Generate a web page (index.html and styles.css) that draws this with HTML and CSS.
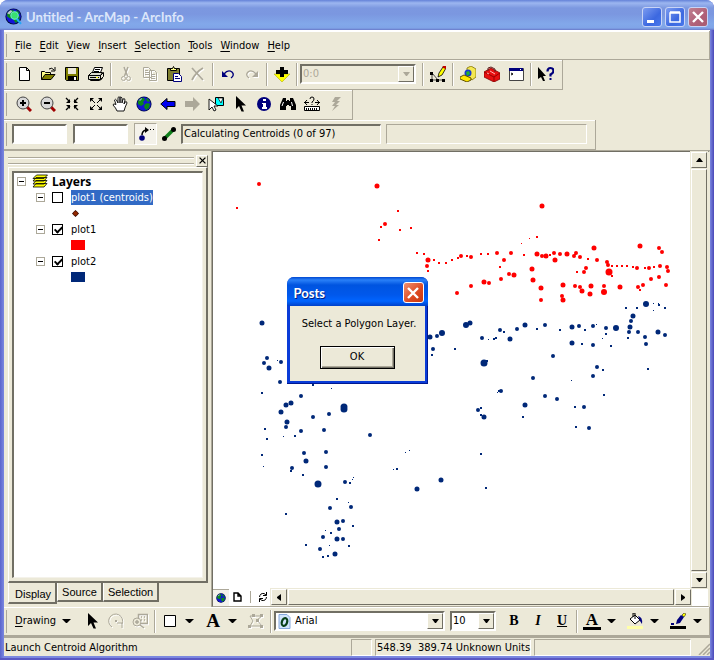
FILE: index.html
```html
<!DOCTYPE html>
<html lang="en">
<head>
<meta charset="utf-8">
<title>Untitled - ArcMap - ArcInfo</title>
<link rel="stylesheet" href="styles.css">
</head>
<body>
<svg class="defs" aria-hidden="true">
  <symbol id="globe" viewBox="0 0 16 16"><circle cx="8" cy="8" r="7.6" fill="#001040"/><circle cx="8" cy="8" r="6.8" fill="#1414d8"/><path d="M2 5 5 2h3l1 2-2 2 1 2-3 2-3-2zM9 8l3-1 2 1-1 4-3 2-2-3zM11 2l3 3-2 1-2-2z" fill="#0a8a1c"/><path d="M3 4 6 2v1L4 5z" fill="#9ab4c8"/></symbol>
  <symbol id="caret" viewBox="0 0 9 5"><path d="M0 0h9L5 4H4z"/></symbol>
  <symbol id="left" viewBox="0 0 4 7"><path d="M4 0v7L0 4V3z"/></symbol>
  <symbol id="right" viewBox="0 0 4 7"><path d="M0 0v7l4-3V3z"/></symbol>
  <symbol id="up" viewBox="0 0 7 4"><path d="M0 4h7L4 0H3z"/></symbol>
  <symbol id="down" viewBox="0 0 7 4"><path d="M0 0h7L4 4H3z"/></symbol>
  <symbol id="pointer" viewBox="0 0 16 16"><path d="M4 0v13l3-3 2.500 5.500h2.500L9.500 9.500H14z"/></symbol>
  <symbol id="cross" viewBox="0 0 12 12"><path d="M1 1 11 11M11 1 1 11" fill="none" stroke="currentColor" stroke-width="2.200"/></symbol>
</svg>

<div class="window">
  <header class="titlebar">
    <svg class="app-icon" viewBox="0 0 16 16"><use href="#globe"/><path d="M2 5 5 2l2 1-3 3z" fill="#b8c4cc"/><circle cx="9" cy="7" r="3.500" fill="#38e070" stroke="#70e8d0"/><path d="M11 10l4 5" stroke="#20a8f8" stroke-width="2"/></svg>
    <h1>Untitled - ArcMap - ArcInfo</h1>
    <button class="caption" aria-label="Minimize"><svg viewBox="0 0 18 18"><path d="M4 12h7v3H4z" fill="#fff"/></svg></button>
    <button class="caption" aria-label="Maximize"><svg viewBox="0 0 18 18"><path d="M4 5h10v9H4zM4 4h10" fill="none" stroke="#fff" stroke-width="1.500"/></svg></button>
    <button class="caption close" aria-label="Close"><svg viewBox="0 0 18 18"><path d="M4 4 14 14M14 4 4 14" stroke="#fff" stroke-width="2.400"/></svg></button>
  </header>

  <div class="client">
    <nav class="bar menubar">
      <button><u>F</u>ile</button><button><u>E</u>dit</button><button><u>V</u>iew</button><button><u>I</u>nsert</button><button><u>S</u>election</button><button><u>T</u>ools</button><button><u>W</u>indow</button><button><u>H</u>elp</button>
    </nav>

    <div class="bar fit">
      <button class="tool" aria-label="New"><svg viewBox="0 0 16 16"><path d="M3.500 1.500h7l3 3v10h-10zM10.500 1.500v3h3" fill="#fff" stroke="#000"/></svg></button>
      <button class="tool" aria-label="Open"><svg viewBox="0 0 16 16"><path d="M1.500 13.500v-8h3l1 1h5v2" fill="#ff8" stroke="#000"/><path d="M1.500 13.500 5 8.500h10l-4 5z" fill="#808000" stroke="#000"/><path d="M9 3q3-2 5 1M15 1v4h-4" fill="none" stroke="#000"/></svg></button>
      <button class="tool" aria-label="Save"><svg viewBox="0 0 16 16"><path d="M1.500 1.500h13v13h-12l-1-1z" fill="#808000" stroke="#000"/><path d="M4 2h8v6H4z" fill="#ece9d8"/><path d="M4 10h9v4H4z"/><path d="M10 11h2v3h-2z" fill="#fff"/></svg></button>
      <button class="tool" aria-label="Print"><svg viewBox="0 0 16 16"><path d="M4.500 6.500 6.500 1.500h8l-2 5z" fill="#fff" stroke="#000"/><path d="M7 3.500h5M6 5.500h5"  stroke="#000"/><path d="M.5 9.500l3-3h11l-2 3zM.5 9.500h12v4H.5z" fill="#dcdcd0" stroke="#000"/><path d="M12.500 9.500l3-3v4l-3 3M2.500 13.500v1h9l3-2" fill="none" stroke="#000"/><path d="M2 11.500h9" stroke="#000"/><path d="M8 11h2v1H8z" fill="#ff0"/></svg></button>
      <i class="sep"></i>
      <button class="tool off" aria-label="Cut"><svg viewBox="0 0 16 16"><path d="M6 1l3.500 9M10 1 6.500 10" fill="none" stroke="currentColor" stroke-width="1.500"/><circle cx="5.500" cy="12.500" r="2" fill="none" stroke="currentColor"/><circle cx="10.500" cy="12.500" r="2" fill="none" stroke="currentColor"/></svg></button>
      <button class="tool off" aria-label="Copy"><svg viewBox="0 0 16 16"><path d="M1.500 1.500h5l3 3v7h-8zM7.500 4.500h5l2 2v8h-7zM3 4.500h3M3 6.500h4M3 8.500h4M9 8.500h4M9 10.500h4M9 12.500h4" fill="none" stroke="currentColor"/></svg></button>
      <button class="tool" aria-label="Paste"><svg viewBox="0 0 16 16"><path d="M1.500 2.500h12v12h-12z" fill="#808030" stroke="#000"/><path d="M4.500 4.500v-2h2l1-2 1 2h2v2z" fill="#ff8" stroke="#000"/><path d="M7.500 7.500h5l3 3v5h-8z" fill="#fff" stroke="#00007c"/><path d="M9 10.500h3M9 12.500h5" stroke="#00007c"/></svg></button>
      <button class="tool off" aria-label="Delete"><svg viewBox="0 0 16 16"><path d="M2 2l11 12M13 2Q6 6 2 14" fill="none" stroke="currentColor" stroke-width="1.800"/></svg></button>
      <i class="sep"></i>
      <button class="tool" aria-label="Undo"><svg viewBox="0 0 16 16"><path d="M4 8q4-5 8-2 3 3-1 6" fill="none" stroke="#00007c" stroke-width="1.400"/><path d="M2 5v6h6z" fill="#00007c"/></svg></button>
      <button class="tool off" aria-label="Redo"><svg viewBox="0 0 16 16"><path d="M12 8Q8 3 4 6q-3 3 1 6" fill="none" stroke="currentColor" stroke-width="1.300"/><path d="M14 5v6H8z" fill="currentColor"/></svg></button>
      <i class="sep"></i>
      <button class="tool" aria-label="Add data"><svg viewBox="0 0 16 16"><path d="M0 8h16l-8 8z" fill="#ff0" stroke="#a0a000" stroke-width=".5"/><path d="M6 1h4v3h4v4h-4v3H6V8H2V4h4z"/></svg></button>
      <i class="sep"></i>
      <span class="combo scale"><select aria-label="Scale" disabled><option>0:0</option></select><b><svg class="down"><use href="#down"/></svg></b></span>
      <i class="sep"></i>
      <button class="tool" aria-label="Editor"><svg viewBox="0 0 16 16"><path d="M2 7v7h12M2 7l6 7" fill="none" stroke="#000" stroke-width=".7"/><path d="M0 6h3v3H0zM0 13h3v3H0zM6 13h3v3H6zM12 13h3v3h-3z"/><path d="M8 11l1-4 4-6 3 1-4 7z" fill="#ff0" stroke="#000" stroke-width=".8"/><path d="M12.500 0h3.500v3l-3-1z" fill="#c00000"/></svg></button>
      <i class="sep"></i>
      <button class="tool" aria-label="Catalog"><svg viewBox="0 0 16 16"><path d="M7 2l4-2 5 3v8l-4 3-5-4z" fill="#f4e850" stroke="#807000" stroke-width=".8"/><circle cx="8" cy="7" r="3.500" fill="#1838d0"/><path d="M6 6l3-1 1 3-3 2z" fill="#20b030"/><path d="M0 11l4-2 7 3v2l-4 2-7-3z" fill="#ffe800" stroke="#605000"/></svg></button>
      <button class="tool" aria-label="Toolbox"><svg viewBox="0 0 16 16"><path d="M0 6l7-4 9 5v6l-6 3L0 11z" fill="#e81010" stroke="#800000" stroke-width=".8"/><path d="M0 6l10 5 6-4M10 11v5" fill="none" stroke="#900"/><path d="M4 5V2l3-1 4 2v3" fill="none" stroke="#602020"/><path d="M3 7l2 1M6 5l5 3" stroke="#ffb0b0"/></svg></button>
      <button class="tool" aria-label="Command window"><svg viewBox="0 0 16 16"><path d="M1.500 2.500h14v12h-14z" fill="#fff" stroke="#444"/><path d="M1 2h14v3H1z" fill="#00007c"/><path d="M3 7l2 1-2 1" fill="none" stroke="#000"/><path d="M12 3h1v1h-1z" fill="#fff"/></svg></button>
      <i class="sep"></i>
      <button class="tool" aria-label="What's this?"><svg viewBox="0 0 16 16"><path d="M0 1v12l3-2 2 4h2L5 10h3z"/><path d="M9.500 5.500q0-3.500 3-3.500t3 3q0 2-3 3.500v2" fill="none" stroke="#00007c" stroke-width="2.200"/><path d="M11.500 12h2v2h-2z" fill="#00007c"/></svg></button>
    </div>

    <div class="bar fit">
      <button class="tool" aria-label="Zoom in"><svg viewBox="0 0 16 16"><path d="M11 11l4 4" stroke="#a00000" stroke-width="3"/><circle cx="7" cy="7" r="6" fill="#d8d8d8" stroke="#444"/><path d="M4 7h6M7 4v6" stroke="#000" stroke-width="2"/></svg></button>
      <button class="tool" aria-label="Zoom out"><svg viewBox="0 0 16 16"><path d="M11 11l4 4" stroke="#a00000" stroke-width="3"/><circle cx="7" cy="7" r="6" fill="#d8d8d8" stroke="#444"/><path d="M4 7h6" stroke="#000" stroke-width="2"/></svg></button>
      <button class="tool" aria-label="Fixed zoom in"><svg viewBox="0 0 16 16"><path d="M2 2l4 4M14 2l-4 4M2 14l4-4M14 14l-4-4" stroke="#000" stroke-width="1.300"/><path d="M6 3v4H2zM10 3v4h4zM6 13V9H2zM10 13V9h4z"/></svg></button>
      <button class="tool" aria-label="Fixed zoom out"><svg viewBox="0 0 16 16"><path d="M3 3l4 4M13 3 9 7M3 13l4-4M13 13 9 9" stroke="#000"/><path d="M2 2h4L2 6zM14 2h-4l4 4zM2 14h4l-4-4zM14 14h-4l4-4z"/></svg></button>
      <button class="tool" aria-label="Pan"><svg viewBox="0 0 16 16"><path d="M5 15q-1-3-4-6 0-2 3-.5L2.500 4q1-1.500 2 0L6 7V1.500q1-1.500 2 0V7V1.500Q9 0 10 2v5l1-4q2-1 2 1l-1 4 1-2q2-1 2 1-2 4-3 8z" fill="#fff" stroke="#000" stroke-width=".9"/></svg></button>
      <button class="tool" aria-label="Full extent"><svg><use href="#globe"/></svg></button>
      <button class="tool" aria-label="Previous extent"><svg viewBox="0 0 16 16"><path d="M.8 8 7 2.500v3h8v5H7v3z" fill="#0000f0" stroke="#000"/></svg></button>
      <button class="tool" aria-label="Next extent"><svg viewBox="0 0 16 16"><path d="M16 8 9 1v4H1v6h8v4z" fill="#aca899"/></svg></button>
      <button class="tool" aria-label="Select features"><svg viewBox="0 0 16 16"><path d="M7.500 1.500h8v8h-8z" fill="#0ff" stroke="#000"/><path d="M10 2l3 5 2-5z" fill="#fff" stroke="#000" stroke-width=".7"/><path d="M1 3v11l3-3 2 4 2-1-2-4h4z" fill="#fff" stroke="#000" stroke-width=".9"/></svg></button>
      <button class="tool" aria-label="Select elements"><svg><use href="#pointer"/></svg></button>
      <button class="tool" aria-label="Identify"><svg viewBox="0 0 16 16"><circle cx="8" cy="8" r="7" fill="#00007c"/><path d="M7 3h3v2H7zM6 7h4v4h1v2H6v-2h1V8H6z" fill="#fff"/></svg></button>
      <button class="tool" aria-label="Find"><svg viewBox="0 0 16 16"><path d="M3 2h3v3h1V4h2v1h1V2h3l3 7v5h-5v-4H9v-1H7v1H6v4H0V9z"/><path d="M3.500 6 2 10M11.500 6l1 4" stroke="#fff"/></svg></button>
      <button class="tool" aria-label="Measure"><svg viewBox="0 0 16 16"><path d="M0 6.500h5M11 6.500h5M3 4 .7 6.500 3 9M13 4l2.300 2.500L13 9M6 3q0-2 2-2t2 2-2 3v1M8 8v1" fill="none" stroke="#000"/><path d="M.5 10.500h15v4H.5z" fill="#fff" stroke="#000"/><path d="M2.500 12v2M4.500 12v2M6.500 12v2M8.500 12v2M10.500 12v2M12.500 12v2" stroke="#000"/></svg></button>
      <button class="tool" aria-label="Hyperlink"><svg viewBox="0 0 16 16"><path d="M7 1h6L9 5h3l-4 4h3l-7 6 3-5H4l3-4H4z" fill="#aca899"/></svg></button>
    </div>

    <div class="bar fit entry">
      <input aria-label="X"><input aria-label="Y">
      <button class="tool pressed" aria-label="Sketch"><svg viewBox="0 0 16 16"><circle cx="4" cy="12" r="2.800" fill="#00007c"/><path d="M4 9q0-4 4-5" fill="none" stroke="#000" stroke-width="1.500"/><path d="M7 1l4 3-4 3zM12 3h1v1h-1zM15 3h1v1h-1z"/></svg></button>
      <button class="tool" aria-label="Line"><svg viewBox="0 0 16 16"><path d="M3 13 13 3" stroke="#10801c" stroke-width="3.500"/><circle cx="3.500" cy="12.500" r="2.500"/><circle cx="12.500" cy="3.500" r="2.500"/></svg></button>
      <output class="cell message">Calculating Centroids (0 of 97)</output>
      <span class="cell blank"></span>
    </div>

    <main>
      <aside>
        <div class="grab"><i></i><button aria-label="Close table of contents"><svg viewBox="0 0 12 12"><use href="#cross"/></svg></button></div>
        <div class="frame">
          <ul class="tree">
            <li class="root"><i class="minus"></i><svg class="stack" viewBox="0 0 16 14"><path d="M4 9.500h11l-3 3.500H1z M4 6.500h11l-3 3.500H1z M4 3.500h11l-3 3.500H1zM4.500 1h11l-3.500 3.500H1z" fill="#ff0" stroke="#000" stroke-width=".8"/></svg><strong>Layers</strong></li>
            <li><i class="minus"></i><input type="checkbox" id="l0"><label class="chosen" for="l0">plot1 (centroids)</label></li>
            <li class="symbol"><svg viewBox="0 0 7 7"><path d="M3.500 0 7 3.500 3.500 7 0 3.500z" fill="#200"/><circle cx="3.500" cy="3.500" r="2.300" fill="#902800"/></svg></li>
            <li><i class="minus"></i><input type="checkbox" id="l1" checked><label for="l1">plot1</label></li>
            <li class="symbol"><b class="swatch red"></b></li>
            <li><i class="minus"></i><input type="checkbox" id="l2" checked><label for="l2">plot2</label></li>
            <li class="symbol"><b class="swatch navy"></b></li>
          </ul>
        </div>
        <div class="tabs"><button class="current">Display</button><button>Source</button><button>Selection</button></div>
      </aside>

      <section class="view">
        <svg class="map" role="img" aria-label="Map of plot1 and plot2">
          <g transform="translate(-213 -152)">
            <g class="plot1">
              <path class="s1" d="M529 238h0M521 243h0"/>
              <path class="s2" d="M237 208h0M398 211h0M381 227h0M400 230h0M411 228h0M379 240h0M537 237h0M417 253h0M424 254h0M428 271h0M434 260h0M439 263h0M446 263h0M452 260h0M458 258h0M467 256h0M481 254h0M488 254h0M500 267h0M524 255h0M550 255h0M588 259h0M612 266h0M617 266h0M622 266h0M627 266h0M633 267h0M645 268h0M654 267h0M640 290h0M612 276h0M577 272h0"/>
              <path class="s3" d="M259 184h0M385 224h0M427 266h0M461 256h0M471 257h0M497 253h0M511 253h0M504 260h0M542 256h0M554 253h0M560 254h0M574 256h0M576 253h0M580 257h0M597 260h0M607 262h0M608 265h0M637 268h0M649 268h0M660 266h0M667 267h0M668 271h0M659 248h0M662 252h0M659 277h0M651 279h0M643 285h0M638 287h0M666 285h0M586 268h0M584 272h0M541 300h0M575 286h0M580 287h0M604 286h0M562 296h0M509 274h0M501 279h0M489 283h0M471 286h0M457 293h0"/>
              <path class="s4" d="M377 186h0M542 206h0M428 260h0M537 254h0M546 256h0M555 260h0M567 254h0M594 248h0M640 246h0M532 269h0M533 280h0M541 288h0M563 285h0M582 291h0M591 286h0M590 294h0M620 287h0M563 300h0M514 275h0M484 282h0"/>
              <path class="s5" d="M604 292h0"/>
              <path class="s6" d="M609 272h0"/>
            </g>
            <g class="plot2">
              <path class="s1" d="M653 303h0M658 303h0M653 310h0M602 338h0M596 324h0M488 339h0M571 380h0M497 392h0M277 360h0M331 388h0M283 436h0M263 466h0M353 477h0M352 479h0M348 502h0M325 530h0M329 545h0M405 452h0M409 450h0M393 469h0"/>
              <path class="s2" d="M659 305h0M665 308h0M637 308h0M626 308h0M628 338h0M648 369h0M606 334h0M611 346h0M585 330h0M582 344h0M560 330h0M537 329h0M504 332h0M496 338h0M494 339h0M432 355h0M455 349h0M487 361h0M603 370h0M499 391h0M604 395h0M523 417h0M575 407h0M576 427h0M481 408h0M481 415h0M481 454h0M486 488h0M262 393h0M313 385h0M265 429h0M267 439h0M295 436h0M262 455h0M291 471h0M303 475h0M350 483h0M337 499h0M286 514h0M331 533h0M353 526h0M349 546h0M306 545h0M323 557h0M328 556h0M397 469h0"/>
              <path class="s3" d="M631 321h0M629 332h0M638 332h0M645 337h0M646 344h0M665 335h0M606 328h0M593 326h0M579 326h0M593 345h0M545 325h0M517 329h0M500 330h0M482 338h0M437 336h0M433 349h0M553 356h0M597 367h0M593 376h0M533 378h0M501 391h0M545 396h0M557 399h0M584 407h0M589 428h0M478 410h0M267 358h0M264 363h0M281 362h0M280 382h0M301 396h0M329 414h0M313 417h0M286 427h0M301 431h0M324 430h0M370 435h0M304 453h0M326 452h0M326 467h0M292 468h0M345 482h0M351 507h0M330 508h0M343 521h0M339 529h0M323 537h0M343 539h0M320 549h0"/>
              <path class="s4" d="M633 316h0M630 327h0M658 332h0M572 327h0M572 343h0M525 325h0M510 339h0M470 323h0M430 337h0M525 405h0M484 417h0M441 480h0M417 489h0M262 323h0M269 368h0M291 403h0M286 405h0M281 412h0M287 422h0M306 461h0M337 522h0M337 539h0M335 554h0"/>
              <path class="s5" d="M646 304h0M616 328h0M466 325h0M442 333h0"/>
              <path class="s6" d="M484 363h0M318 484h0M344 407h0M344 409h0"/>
            </g>
          </g>
        </svg>
        <div class="vscroll"><button class="face" aria-label="Scroll up"><svg class="down"><use href="#up"/></svg></button><i class="face thumb"></i><button class="face" aria-label="Scroll down"><svg class="down"><use href="#down"/></svg></button></div>
        <div class="hscroll">
          <button class="mode on" aria-label="Data view"><svg><use href="#globe"/></svg></button>
          <button class="mode" aria-label="Layout view"><svg viewBox="0 0 10 10"><path d="M2 1h4l3 3v5H2zM6 1v3h3" fill="none" stroke="#000" stroke-width="1.400"/></svg></button>
          <i class="rule"></i>
          <button class="mode" aria-label="Refresh"><svg viewBox="0 0 10 10"><path d="M1.500 5Q2 1 6 1.500L8 3M8.500 5Q8 9 4 8.500L2 7M8.500 0v3.500H5M1.500 10V6.500H5" fill="none" stroke="#000"/></svg></button>
          <button class="face" aria-label="Scroll left"><svg class="side"><use href="#left"/></svg></button><i class="face thumb"></i><button class="face" aria-label="Scroll right"><svg class="side"><use href="#right"/></svg></button><i class="corner"></i>
        </div>
      </section>
    </main>

    <div class="bar drawing">
      <button class="menu"><span><u>D</u>rawing</span><svg class="caret"><use href="#caret"/></svg></button>
      <button class="tool" aria-label="Pointer"><svg><use href="#pointer"/></svg></button>
      <button class="tool off" aria-label="Rotate"><svg viewBox="0 0 16 16"><path d="M4 14A7 7 0 1 1 14 11M14 15v-5H9" fill="none" stroke="currentColor"/><path d="M7 7h2v2H7z" fill="currentColor"/></svg></button>
      <button class="tool off" aria-label="Zoom to selected"><svg viewBox="0 0 16 16"><path d="M6.500 1.500h9v9h-9zM9 4h1M12 4h1M9 7h1M12 7h1" fill="none" stroke="currentColor" stroke-width="1.500"/><circle cx="5" cy="9" r="4" fill="#ece9d8" stroke="currentColor"/><path d="M3 9h4M5 7v4M8 12l4 3" stroke="currentColor" stroke-width="1.500"/></svg></button>
      <i class="sep"></i>
      <button class="tool" aria-label="Rectangle"><svg viewBox="0 0 16 16"><path d="M2.500 2.500h11v11h-11z" fill="#fff" stroke="#000"/></svg></button><button class="drop" aria-label="Shapes"><svg class="caret"><use href="#caret"/></svg></button>
      <button class="tool letter" aria-label="Text">A</button><button class="drop" aria-label="Text tools"><svg class="caret"><use href="#caret"/></svg></button>
      <button class="tool off" aria-label="Edit vertices"><svg viewBox="0 0 16 16"><path d="M2 3h12L9 7l5 6H2l3-5z" fill="none" stroke="currentColor"/><path d="M4 1h3v3H4zM12 1h3v3h-3zM0 12h3v3H0zM12 12h3v3h-3zM8 6h3v3H8z" fill="currentColor"/></svg></button>
      <i class="sep"></i>
      <span class="combo font"><svg class="face-icon" viewBox="0 0 13 15"><path d="M1 .5h8l3 3v11H1z" fill="#d0e4fc" stroke="#86a8dc"/><ellipse cx="6.500" cy="8" rx="2.600" ry="4" fill="none" stroke="#084018" stroke-width="2.200" transform="rotate(20 6.500 8)"/></svg><select aria-label="Font"><option>Arial</option></select><b><svg class="down"><use href="#down"/></svg></b></span>
      <span class="combo size"><select aria-label="Font size"><option>10</option></select><b><svg class="down"><use href="#down"/></svg></b></span>
      <button class="tool style bold">B</button><button class="tool style italic">I</button><button class="tool style under">U</button>
      <i class="sep"></i>
      <button class="tool letter ink" aria-label="Text color">A</button><button class="drop" aria-label="Text colors"><svg class="caret"><use href="#caret"/></svg></button>
      <button class="tool" aria-label="Fill color"><svg viewBox="0 0 16 16"><path d="M0 13h16v3H0z" fill="#ffffa8"/><path d="M3 6l5-4 5 5-5 4z" fill="#fff" stroke="#000"/><path d="M8 6V0H6v4" fill="none" stroke="#000"/><path d="M11 3q5 1 4 8l-2-3z" fill="#00007c"/></svg></button><button class="drop" aria-label="Fill colors"><svg class="caret"><use href="#caret"/></svg></button>
      <button class="tool" aria-label="Line color"><svg viewBox="0 0 16 16"><path d="M0 13h16v3H0z"/><path d="M6 11l1-4 4-5 3 2-4 6z" fill="#00007c"/><path d="M12 2l2-2 2 1-2 3z" fill="#ff0" stroke="#000" stroke-width=".5"/><path d="M1 10h3v2H1z" fill="#00007c"/></svg></button><button class="drop" aria-label="Line colors"><svg class="caret"><use href="#caret"/></svg></button>
    </div>

    <footer>
      <span class="hint">Launch Centroid Algorithm</span>
      <span class="cell tiny"></span><span class="cell coords">548.39&nbsp; 389.74 Unknown Units</span><span class="cell last"></span>
      <svg class="grip" viewBox="0 0 12 12"><path d="M1 12 12 1M5 12l7-7M9 12l3-3" stroke="#aca899" stroke-width="1.500"/></svg>
    </footer>
  </div>

  <div class="dialog" role="dialog" aria-labelledby="dlg">
    <header><h2 id="dlg">Posts</h2><button class="caption close" aria-label="Close message"><svg viewBox="0 0 18 18"><path d="M4 4 14 14M14 4 4 14" stroke="#fff" stroke-width="2.400"/></svg></button></header>
    <div class="body"><p>Select a Polygon Layer.</p><button class="ok">OK</button></div>
  </div>
</div>
</body>
</html>
```
FILE: styles.css
```css
* { box-sizing: border-box; }
:root {
  --face: #ece9d8;
  --shade: #aca899;
  --dark: #716f64;
  --navy: #002878;
}
body {
  margin: 0;
  background: #fff;
  color: #000;
  font: 11px/16px "DejaVu Sans Condensed", "Liberation Sans", sans-serif;
}
button, input, select {
  font: inherit;
  color: inherit;
  margin: 0;
  padding: 0;
  border: 0;
  border-radius: 0;
  background: none;
}
svg { display: block; }
.defs { position: absolute; width: 0; height: 0; }

.window {
  position: relative;
  display: flex;
  flex-direction: column;
  height: 100vh;
  min-height: 480px;
  padding: 0 4px 4px;
  border-radius: 8px 8px 0 0;
  background: linear-gradient(90deg, #5a64cc, #7b88e0 4px, #7b88e0 calc(100% - 4px), #4a48b8);
  box-shadow: inset 0 -2px #5a58c4;
}
.titlebar {
  display: flex;
  align-items: center;
  gap: 3px;
  flex: none;
  height: 30px;
  margin: 0 -4px;
  padding: 3px 6px 0 5px;
  border-radius: 8px 8px 0 0;
  background: linear-gradient(#6482d8, #9cb6f0 3px, #7c98e0 8px, #7b97e0 14px, #82a8ea 24px, #80a4e8 28px, #6878c8);
}
.titlebar h1 {
  flex: 1;
  margin: 0;
  padding-left: 1px;
  color: #dce6fa;
  font: bold 13px/20px Lato, "Open Sans", sans-serif;
}
.app-icon { width: 17px; height: 17px; }
.caption {
  width: 20px;
  height: 20px;
  border: 1px solid #c8d4f6;
  border-radius: 3px;
  background: linear-gradient(135deg, #7c9cf0, #3c68e0 60%, #4878ec);
}
.caption.close { background: linear-gradient(135deg, #c08090, #b06078 60%, #a85c70); }
.caption svg { width: 18px; height: 18px; }

.client {
  display: flex;
  flex: 1;
  flex-direction: column;
  min-height: 0;
  border-top: 1px solid #fff;
  background: var(--face);
}
.bar {
  display: flex;
  align-items: center;
  flex: none;
  height: 30px;
  padding: 0 4px 1px 8px;
  border: solid var(--shade);
  border-width: 0 1px 1px 0;
  box-shadow: inset 0 1px #fff;
  background: linear-gradient(var(--shade), var(--shade)) 2px 3px / 1px 23px no-repeat;
}
.fit { align-self: flex-start; }
.menubar { gap: 8px; height: 29px; padding: 1px 4px 0 11px; }
u { text-underline-offset: 2px; }
.tool {
  display: grid;
  place-items: center;
  flex: none;
  width: 24px;
  height: 22px;
}
.tool svg { width: 16px; height: 16px; }
.off { color: var(--shade); }
.off svg { filter: drop-shadow(1px 1px #fff); }
.sep {
  flex: none;
  width: 2px;
  height: 23px;
  margin: 0 2px;
  border-left: 1px solid var(--shade);
  border-right: 1px solid #fff;
}
.combo {
  position: relative;
  display: flex;
  flex: none;
  height: 20px;
  border: 2px solid;
  border-color: var(--dark) #fff #fff var(--dark);
  background: #fff;
}
.combo select {
  flex: 1;
  min-width: 0;
  padding: 0 18px 0 1px;
  appearance: none;
  opacity: 1;
}
.combo b {
  position: absolute;
  inset: 0 0 0 auto;
  display: grid;
  place-items: center;
  width: 16px;
  border: 1px solid;
  border-color: #fff var(--dark) var(--dark) #fff;
  background: var(--face);
  pointer-events: none;
}
.down { width: 7px; height: 4px; }
.side { width: 4px; height: 7px; }
.caret { width: 9px; height: 5px; }
.scale { width: 116px; margin-right: 4px; background: var(--face); color: var(--shade); }
.scale svg { fill: var(--shade); }

.entry { padding-right: 8px; }
.entry input {
  width: 55px;
  height: 20px;
  margin-right: 6px;
  border: 2px solid;
  border-color: var(--dark) #fff #fff var(--dark);
  background: #fff;
}
.pressed {
  width: 23px;
  border: 1px solid;
  border-color: var(--shade) #fff #fff var(--shade);
  background: #f4f2ea;
}
.cell {
  height: 20px;
  border: 1px solid;
  border-color: var(--shade) #fff #fff var(--shade);
  white-space: nowrap;
}
.message {
  width: 200px;
  padding-left: 1px;
  border-width: 2px 1px 1px 2px;
  border-color: var(--dark) #fff #fff var(--dark);
}
.blank { width: 201px; margin-left: 5px; }

main { display: flex; flex: 1; min-height: 0; border-top: 1px solid var(--shade); }
aside {
  display: flex;
  flex-direction: column;
  flex: none;
  width: 208px;
  padding: 3px 3px 0 4px;
  border-right: 1px solid var(--shade);
}
.grab { display: flex; align-items: center; justify-content: space-between; height: 13px; }
.grab i {
  width: 186px;
  height: 7px;
  border: solid var(--shade);
  border-width: 1px 0;
  box-shadow: inset 0 1px #fff, 0 1px #fff;
}
.grab button {
  display: grid;
  place-items: center;
  width: 12px;
  height: 12px;
  border: 1px solid;
  border-color: #fff var(--dark) var(--dark) #fff;
}
.grab svg { width: 7px; height: 7px; }
.frame {
  flex: 1;
  min-height: 0;
  padding: 3px;
  border: solid;
  border-width: 1px 2px 2px 1px;
  border-color: #fff var(--dark) var(--dark) #fff;
}
.tree {
  height: 100%;
  margin: 0;
  padding: 0 0 0 22px;
  overflow: hidden;
  border: solid;
  border-width: 2px 1px 1px 2px;
  border-color: var(--dark) #f4f2ea #f4f2ea var(--dark);
  background: #fff;
  list-style: none;
  line-height: 15px;
}
.tree li { display: flex; align-items: center; height: 16px; }
.tree .root { margin-left: -19px; }
.root strong { margin-left: 4px; font: bold 12px/15px "Noto Sans", sans-serif; }
.minus {
  flex: none;
  width: 9px;
  height: 9px;
  margin-right: 7px;
  border: 1px solid var(--shade);
  background: linear-gradient(#000, #000) center / 5px 1px no-repeat;
}
.root .minus { margin-right: 6px; }
.stack { width: 16px; height: 14px; }
.tree input {
  appearance: none;
  width: 11px;
  height: 11px;
  margin-right: 8px;
  border: 1px solid #000;
  background: #fff;
}
.tree input:checked::before {
  content: "";
  display: block;
  width: 3px;
  height: 6px;
  margin: 0 0 0 3px;
  border: solid #000;
  border-width: 0 2px 2px 0;
  transform: rotate(45deg);
}
.tree .chosen { background: #316ac5; color: #fff; }
.tree .symbol { padding-left: 35px; }
.symbol svg { width: 7px; height: 7px; margin-left: 1px; }
.swatch { width: 14px; height: 10px; }
.red { background: #f00; }
.navy { background: var(--navy); }
.tabs {
  display: flex;
  align-items: flex-start;
  height: 24px;
  font: 11px/16px "Liberation Sans", Arial, sans-serif;
}
.tabs button {
  height: 19px;
  padding: 0 4px;
  border: solid;
  border-width: 0 2px 2px 1px;
  border-color: #fff var(--dark) var(--dark) #fff;
}
.tabs .current { height: 21px; padding: 2px 4px 0 6px; }

.view {
  display: grid;
  flex: 1;
  grid-template: minmax(0, 1fr) 18px / minmax(0, 1fr) 17px;
  border: solid;
  border-width: 1px 2px 1px 1px;
  border-color: var(--dark) var(--face) var(--shade) var(--dark);
  background: #fff;
}
.map { width: 100%; height: 100%; overflow: hidden; }
.map path { fill: none; stroke-linecap: round; }
.plot1 { stroke: #f00; }
.plot2 { stroke: var(--navy); }
.map .s1, .map .s2 { stroke-linecap: square; shape-rendering: crispEdges; }
.s1 { stroke-width: 1px; }
.s2 { stroke-width: 2px; }
.s3 { stroke-width: 4px; }
.s4 { stroke-width: 5px; }
.s5 { stroke-width: 6px; }
.s6 { stroke-width: 7px; }
.face {
  display: grid;
  place-items: center;
  flex: none;
  width: 16px;
  height: 16px;
  border: 1px solid;
  border-color: #fff var(--dark) var(--dark) #fff;
  background: var(--face);
  box-shadow: 0 0 0 1px var(--face);
}
.thumb { flex: 1; margin: 1px; }
.vscroll { display: flex; flex-direction: column; }
.vscroll .thumb { margin: 1px 0; }
.hscroll { display: flex; grid-column: 1 / -1; align-items: center; }
.hscroll .thumb { margin: 0 1px; }
.mode { display: grid; place-items: center; width: 16px; height: 17px; }
.mode svg { width: 10px; height: 10px; }
.on { border-top: 1px solid var(--shade); background: #f4f2ea; }
.rule { width: 1px; height: 12px; margin: 0 4px 0 5px; background: var(--shade); }
.corner { width: 17px; }

.drawing { height: 29px; padding: 0 0 0 8px; }
.menu { display: flex; align-items: center; gap: 6px; width: 71px; padding-left: 3px; }
.drop { display: grid; place-items: center; flex: none; width: 19px; height: 22px; padding-right: 5px; }
.letter { font: bold 19px/18px "Liberation Serif", serif; }
.ink { place-content: center; font-size: 17px; line-height: 14px; }
.ink::after { content: ""; width: 18px; height: 3px; background: #000; }
.font { width: 171px; align-items: center; }
.face-icon { width: 13px; height: 15px; margin-left: 2px; }
.font select { padding-left: 4px; }
.size { width: 46px; margin: 0 6px 0 5px; }
.style { font: bold 14px/16px "Liberation Serif", serif; }
.italic { font-style: italic; }
.under { text-decoration: underline; }

footer {
  display: flex;
  align-items: flex-end;
  flex: none;
  height: 20px;
  border-top: 2px solid var(--shade);
}
footer .hint { flex: 1; padding-left: 1px; line-height: 17px; }
footer .cell { height: 17px; margin-right: 3px; }
.tiny { width: 21px; }
.coords { width: 156px; padding-left: 1px; }
.last { width: 157px; }
.grip { width: 12px; height: 12px; margin: 0 0 1px 4px; }

.dialog {
  position: absolute;
  inset: 0;
  width: 141px;
  height: fit-content;
  margin: auto;
  padding: 0 3px 3px;
  border-radius: 7px 7px 0 0;
  background: #0a3cd8;
  box-shadow: inset -1px -1px #001890;
}
.dialog header {
  display: flex;
  align-items: center;
  justify-content: space-between;
  height: 29px;
  margin: 0 -3px;
  padding: 3px 4px 0 7px;
  border-radius: 7px 7px 0 0;
  background: linear-gradient(#0048d0, #2a80f8 3px, #0054e0 8px, #0058ec 18px, #0064ff 24px, #0040c8);
}
.dialog h2 { margin: 0; color: #fff; font: bold 13px/20px Lato, "Open Sans", sans-serif; text-shadow: 1px 1px #002080; }
.dialog .caption { width: 21px; height: 21px; border-color: #fff; }
.dialog .close { background: linear-gradient(135deg, #f09070, #dc4820 60%, #c83810); }
.body { padding: 10px 0 12px; background: var(--face); text-align: center; }
.body p { margin: 0 0 14px; padding-left: 4px; white-space: nowrap; }
.ok {
  width: 75px;
  height: 23px;
  border: 1px solid #000;
  box-shadow: inset 1px 1px #fff, inset -1px -1px var(--dark), inset -2px -2px var(--shade);
}
```
